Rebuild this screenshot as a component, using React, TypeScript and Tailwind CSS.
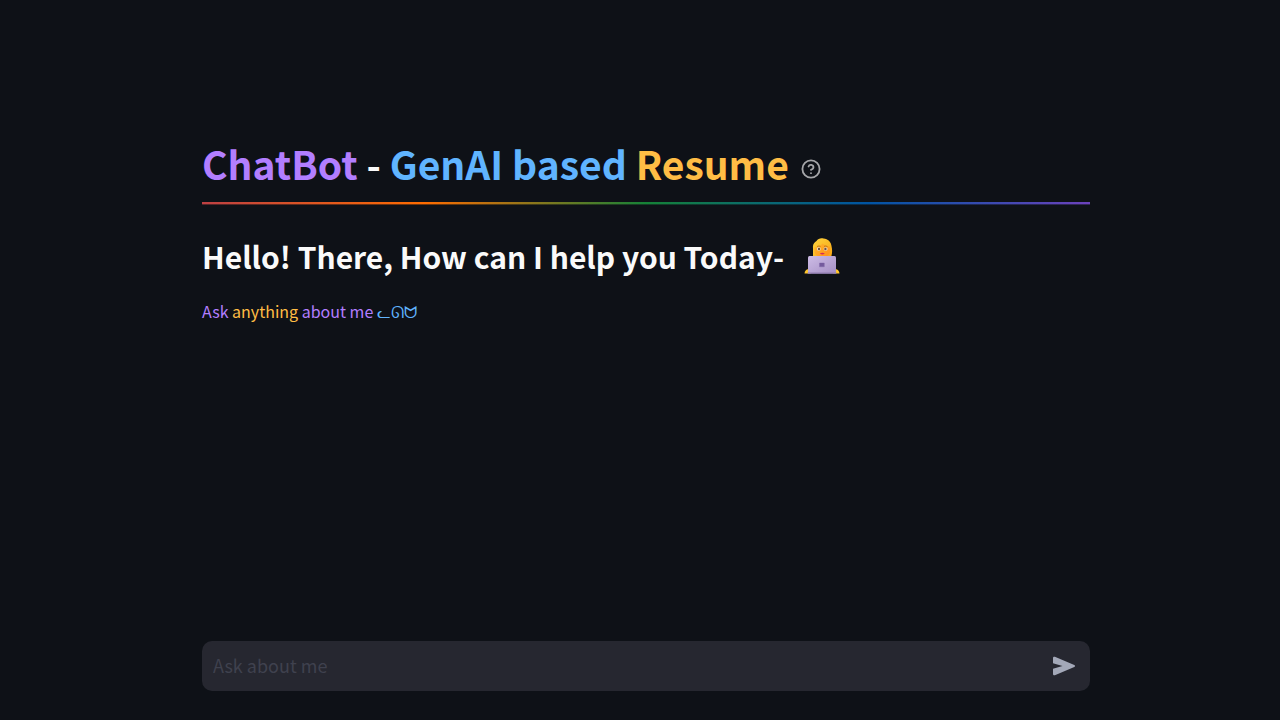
import { useState } from "react";

function HelpIcon() {
  return (
    <svg viewBox="0 0 24 24" className="size-5" fill="none" stroke="#a5a6a9" strokeWidth="2.200" strokeLinecap="round" strokeLinejoin="round" aria-hidden="true">
      <circle cx="12" cy="12" r="10.300" />
      <path d="M9.09 9a3 3 0 0 1 5.83 1c0 2-3 3-3 3" />
      <path d="M12 17h.01" />
    </svg>
  );
}

function Technologist() {
  return (
    <svg viewBox="0 0 36 36" className="size-9 shrink-0" role="img" aria-label="Technologist">
      <defs>
        <linearGradient id="hair" x1="0" y1="0" x2="1" y2="1">
          <stop offset="0" stopColor="#ffd53d" />
          <stop offset="1" stopColor="#f6a313" />
        </linearGradient>
        <linearGradient id="face" x1="0" y1="0" x2="1" y2="1">
          <stop offset="0" stopColor="#ffb92c" />
          <stop offset="1" stopColor="#ff8c18" />
        </linearGradient>
        <linearGradient id="lid" x1="0" y1="0" x2="1" y2="1">
          <stop offset="0" stopColor="#cdbce6" />
          <stop offset="1" stopColor="#a58fc4" />
        </linearGradient>
      </defs>
      <path d="M9 19V10C8.500 6 10.500 4.500 12.500 3C14 .6 17 -.3 19.500 .6C24 1 27 4 27.500 8C28.300 11 28.500 16 27 19Z" fill="url(#hair)" />
      <path d="M10.500 9.500C14 9 17 7.500 18.500 5.500C20.500 7.200 23.500 8.500 26 9V13C26 17 22.500 19.500 18.500 19.500S10.500 17 10.500 13Z" fill="url(#face)" />
      <ellipse cx="14.800" cy="11" rx="2" ry="1.700" fill="#f3e3cf" />
      <ellipse cx="21.600" cy="11" rx="2" ry="1.700" fill="#f3e3cf" />
      <circle cx="15" cy="11" r="1.200" fill="#70533e" />
      <circle cx="21.400" cy="11" r="1.200" fill="#70533e" />
      <path d="M13 8.500Q15 7.500 16.500 8.400M20 8.400Q21.500 7.500 23.500 8.500" stroke="#b36a12" strokeWidth=".8" fill="none" />
      <path d="M15.800 15.200Q18.300 14.500 20.800 15.200Q18.300 17.900 15.800 15.200" fill="#d82b55" />
      <path d="M.5 35.500Q.8 31.500 4.500 31L7 35.500ZM35.500 35.500Q35.200 31.500 31.500 31L29 35.500Z" fill="#ffc62c" />
      <path d="M5.500 18H30.500Q32 18 32 19.500V35.500H4V19.500Q4 18 5.500 18Z" fill="url(#lid)" />
      <rect x="3.500" y="34.500" width="29" height="1.300" rx=".6" fill="#8f7cae" />
      <path d="M15.500 25h4.800v3.800h-4.800ZM16 27h4" fill="#6d5396" stroke="#8a72b0" strokeWidth=".5" />
    </svg>
  );
}

function SendIcon() {
  return (
    <svg viewBox="0 0 24 20" className="h-5 w-6" fill="#a3a8b8" aria-hidden="true">
      <path d="M1 2v5.200L10.500 10 1 12.800V18c0 1 .9 1.600 1.900 1.200L22.300 11c1-.5 1-1.600 0-2L2.900.8C1.900.4 1 1 1 2Z" />
    </svg>
  );
}

export default function App() {
  const [message, setMessage] = useState("");
  return (
    <div className="flex min-h-screen flex-col bg-[#0e1117] pl-3 font-['Noto_Sans_CJK_SC',sans-serif] text-[#fafafa]">
      <div className="mx-auto flex w-full max-w-[888px] grow flex-col">
        <main className="grow pt-[135px]">
          <h1 className="flex items-center gap-3 text-[39px] leading-[56px] font-bold">
            <span>
              <span className="text-[#b27eff]">ChatBot</span> - <span className="text-[#60b4ff]">GenAI based</span>{" "}
              <span className="text-[#ffbd45]">Resume</span>
            </span>
            <button type="button" aria-label="Help" className="mt-3">
              <HelpIcon />
            </button>
          </h1>
          <hr className="mt-[11px] h-[3px] border-0 bg-[linear-gradient(to_bottom,transparent_66%,#0e111799_67%),linear-gradient(to_right,#bd4043,#ff6c00_25%,#158237_50%,#0054a3_75%,#6c42bc)]" />
          <h2 className="mt-[27px] flex items-center gap-5 text-[30px] leading-[48px] font-bold">
            Hello! There, How can I help you Today- <Technologist />
          </h2>
          <p className="mt-[17px] text-base leading-7 text-[#b27eff]">
            Ask <span className="text-[#ffbd45]">anything</span> about me{" "}
            <span className="text-[#60b4ff]">ᓚᘏᗢ</span>
          </p>
        </main>
        <form
          className="mb-[29px] flex h-[50px] items-center rounded-[10px] bg-[#262730]"
          onSubmit={(event) => {
            event.preventDefault();
            setMessage("");
          }}
        >
          <input
            aria-label="Ask about me"
            placeholder="Ask about me"
            value={message}
            onChange={(event) => setMessage(event.target.value)}
            className="h-full min-w-0 grow bg-transparent pb-0.5 pl-[11px] text-lg outline-none placeholder:text-[#3f414e]"
          />
          <button type="submit" aria-label="Send message" className="px-3.5">
            <SendIcon />
          </button>
        </form>
      </div>
    </div>
  );
}
